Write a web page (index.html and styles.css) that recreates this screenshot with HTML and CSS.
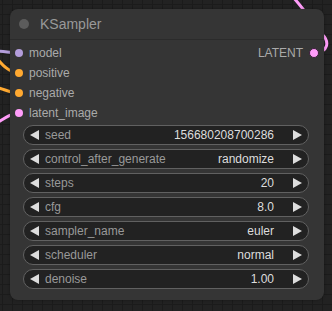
FILE: index.html
```html
<!DOCTYPE html>
<html>
<head>
    <meta charset="utf-8"/>
    <title>KSampler</title>
    <link rel="stylesheet" href="styles.css">
</head>
<body>
<div class="canvas">
    <svg class="wires" width="332" height="311" viewBox="0 0 332 311">
        <path class="wire model" d="M-6 51 C 4 51, 10 53, 19 53"/>
        <path class="wire cond" d="M-6 55 C 0 62, 8 73, 19 73"/>
        <path class="wire cond" d="M-6 87 C 2 88, 10 93, 19 93"/>
        <path class="wire latent" d="M-6 125 C 2 120, 10 113, 19 113"/>
        <path class="wire latent" d="M315 53 C 328 52, 330 42, 322 34 C 315 26, 308 14, 293 -3"/>
    </svg>
    <div class="node">
        <div class="title">
            <span class="collapse"></span>
            <span class="title-text">KSampler</span>
        </div>
        <div class="slots">
            <div class="inputs">
                <div class="slot"><span class="dot model"></span>model</div>
                <div class="slot"><span class="dot cond"></span>positive</div>
                <div class="slot"><span class="dot cond"></span>negative</div>
                <div class="slot"><span class="dot latent"></span>latent_image</div>
            </div>
            <div class="outputs">
                <div class="slot out">LATENT<span class="dot latent linked"></span></div>
            </div>
        </div>
        <div class="widgets">
            <div class="widget"><span class="arrow left"></span><span class="label">seed</span><span class="value">156680208700286</span><span class="arrow right"></span></div>
            <div class="widget"><span class="arrow left"></span><span class="label">control_after_generate</span><span class="value">randomize</span><span class="arrow right"></span></div>
            <div class="widget"><span class="arrow left"></span><span class="label">steps</span><span class="value">20</span><span class="arrow right"></span></div>
            <div class="widget"><span class="arrow left"></span><span class="label">cfg</span><span class="value">8.0</span><span class="arrow right"></span></div>
            <div class="widget"><span class="arrow left"></span><span class="label">sampler_name</span><span class="value">euler</span><span class="arrow right"></span></div>
            <div class="widget"><span class="arrow left"></span><span class="label">scheduler</span><span class="value">normal</span><span class="arrow right"></span></div>
            <div class="widget"><span class="arrow left"></span><span class="label">denoise</span><span class="value">1.00</span><span class="arrow right"></span></div>
        </div>
    </div>
</div>
</body>
</html>
```
FILE: styles.css
```css
* {
    margin: 0;
    padding: 0;
    box-sizing: border-box;
}
body {
    font: 12px/1 "Liberation Sans", Arial, sans-serif;
    background: #222;
    overflow: hidden;
}
.canvas {
    position: relative;
    width: 332px;
    height: 311px;
    overflow: hidden;
    padding: 9px 0 0 10px;
    background-color: #222;
    background-image:
        linear-gradient(to right, #1b1b1b 1px, transparent 1px),
        linear-gradient(to bottom, #1b1b1b 1px, transparent 1px);
    background-size: 10px 10px;
    background-position: 2px 4px;
}
.wires {
    position: absolute;
    left: 0;
    top: 0;
}
.wire {
    fill: none;
    stroke-width: 3;
    stroke-linecap: round;
}
.wire.model {
    stroke: #b39ddb;
}
.wire.cond {
    stroke: #ffa931;
}
.wire.latent {
    stroke: #ff9cf9;
}
.node {
    position: relative;
    width: 314px;
    height: 291px;
    background: #353535;
    border-radius: 8px;
    box-shadow: 0 0 3px rgba(0, 0, 0, 0.35);
}
.title {
    display: flex;
    align-items: center;
    height: 31px;
    padding-left: 9px;
    border-bottom: 1px solid #2b2b2b;
}
.collapse {
    width: 10px;
    height: 10px;
    border-radius: 50%;
    background: #5c5c5c;
}
.title-text {
    margin-left: 11px;
    font-size: 14px;
    color: #999;
}
.slots {
    display: flex;
    justify-content: space-between;
    padding-top: 3px;
}
.slot {
    display: flex;
    align-items: center;
    height: 20px;
    padding-left: 5px;
    color: #aaa;
}
.slot.out {
    padding-left: 0;
    padding-right: 5px;
}
.dot {
    width: 8px;
    height: 8px;
    border-radius: 50%;
    margin-right: 6px;
}
.slot.out .dot {
    margin-right: 0;
    margin-left: 6px;
    width: 10px;
    height: 10px;
}
.dot.model {
    background: #b39ddb;
}
.dot.cond {
    background: #ffa931;
}
.dot.latent {
    background: #ff9cf9;
}
.dot.linked {
    border: 1px solid #3a1f39;
}
.widgets {
    display: flex;
    flex-direction: column;
    gap: 4px;
    padding: 2px 15px 0 13px;
}
.widget {
    display: flex;
    align-items: center;
    height: 20px;
    padding: 0 6px;
    background: #222;
    border: 1px solid #616161;
    border-radius: 10px;
}
.arrow {
    width: 0;
    height: 0;
    border-top: 5px solid transparent;
    border-bottom: 5px solid transparent;
}
.arrow.left {
    border-right: 9px solid #ddd;
}
.arrow.right {
    border-left: 9px solid #ddd;
}
.label {
    margin-left: 6px;
    color: #999;
    flex: 1;
}
.value {
    color: #ddd;
    margin-right: 19px;
}
```
